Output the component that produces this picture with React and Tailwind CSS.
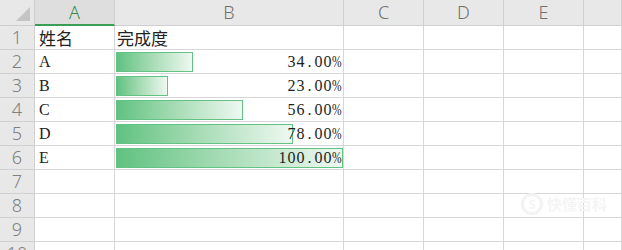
const cols = ['A', 'B', 'C', 'D', 'E', ''];

const rows = [
  { name: '姓名', label: '完成度', header: true },
  { name: 'A', pct: 34 },
  { name: 'B', pct: 23 },
  { name: 'C', pct: 56 },
  { name: 'D', pct: 78 },
  { name: 'E', pct: 100 },
  {}, {}, {}, {},
];

const grid = 'grid grid-cols-[35px_80px_229px_80px_80px_80px_1fr]';
const cell = 'h-6 border-r border-b border-[#d6d6d6] bg-white';
const cjk = "font-['Noto_Sans_CJK_SC',sans-serif]";

// SimSun-like half-width serif: every glyph gets a fixed slot
const Mono = ({ text }) => (
  <span className="relative font-['Liberation_Serif',serif] text-[16px] leading-5 text-[#1e1e1e]">
    {text.split('').map((ch, i) =>
      ch === '%' ? (
        <span key={i} className="inline-block w-[10px]">
          <span className="inline-block scale-x-[0.72] origin-left">{ch}</span>
        </span>
      ) : (
        <span key={i} className="inline-block w-[9px] text-center">{ch}</span>
      )
    )}
  </span>
);

const Bar = ({ pct }) => (
  <div
    className="absolute left-px top-[2px] h-5 border border-[#63c384] bg-gradient-to-r from-[#5fc281] to-[#eef8f1]"
    style={{ width: `${(pct / 100) * 227}px` }}
  />
);

export default function App() {
  return (
    <div className="w-[622px] h-[250px] overflow-hidden bg-white relative font-['Noto_Sans',sans-serif]">
      {/* column headers */}
      <div className={grid}>
        <div className="h-[26px] bg-[#e8e8e8] border-r border-b border-[#cfcfcf] relative">
          <div className="absolute right-[4px] bottom-[4px] w-0 h-0 border-l-[14px] border-l-transparent border-b-[14px] border-b-[#c4c4c4]" />
        </div>
        {cols.map((c, i) => (
          <div
            key={i}
            className={
              c === 'A'
                ? 'h-[26px] bg-[#dedede] border-r border-[#d0d0d0] border-b-2 border-b-[#3a9e55] flex items-center justify-center text-[18px] font-light text-[#2f8a46]'
                : 'h-[26px] bg-[#e8e8e8] border-r border-b border-[#d0d0d0] flex items-center justify-center text-[18px] font-light text-[#707070]'
            }
          >
            {c}
          </div>
        ))}
      </div>

      {rows.map((r, i) => (
        <div key={i} className={grid}>
          <div className="h-6 bg-[#e8e8e8] border-r border-b border-[#d0d0d0] flex items-center justify-center text-[18px] font-light text-[#808080]">
            {i + 1}
          </div>
          <div className={`${cell} flex items-end pl-1 pb-[1px]`}>
            {r.header ? (
              <span className={`text-[17px] leading-5 text-[#222] ${cjk}`}>{r.name}</span>
            ) : (
              r.name && <Mono text={r.name} />
            )}
          </div>
          <div className={`${cell} relative flex items-end justify-end pr-[1px] pb-[1px]`}>
            {r.header && (
              <span className={`absolute left-[2px] bottom-[1px] text-[17px] leading-5 text-[#222] ${cjk}`}>
                {r.label}
              </span>
            )}
            {r.pct != null && <Bar pct={r.pct} />}
            {r.pct != null && <Mono text={`${r.pct}.00%`} />}
          </div>
          <div className={cell} />
          <div className={cell} />
          <div className={cell} />
          <div className={cell} />
        </div>
      ))}

      {/* faint watermark */}
      <div className="absolute left-[521px] top-[193px] flex items-center gap-1 text-[#f5f5f5] pointer-events-none">
        <div className="w-[22px] h-[22px] rounded-full border-[3px] border-[#f3f3f3] flex items-center justify-center text-[13px] font-bold">S</div>
        <span className={`text-[15px] font-bold ${cjk}`}>快懂百科</span>
      </div>
    </div>
  );
}
